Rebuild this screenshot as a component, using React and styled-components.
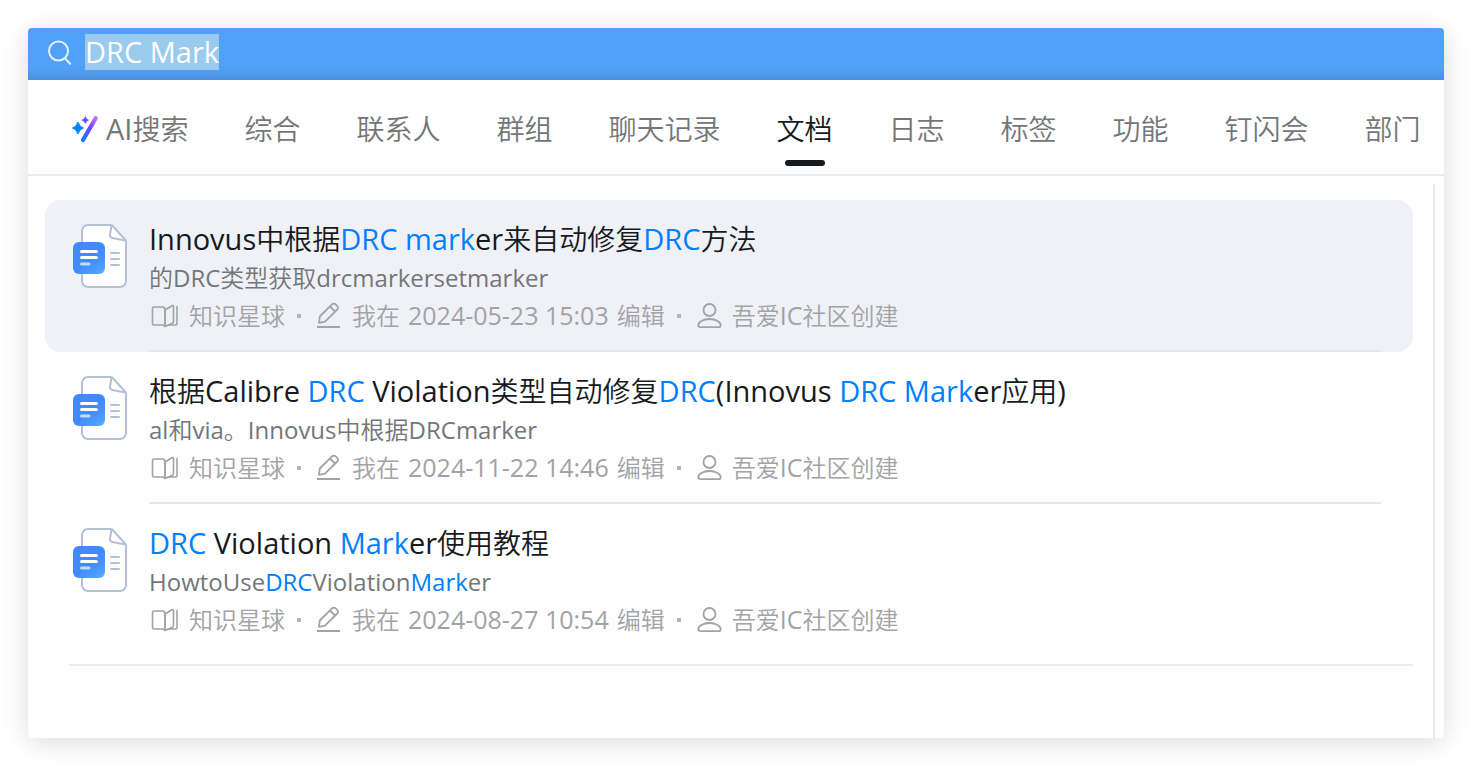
import React, { useEffect, useRef, useState } from "react";
import styled, { createGlobalStyle } from "styled-components";

const GlobalStyle = createGlobalStyle`
  * {
    box-sizing: border-box;
  }
  body {
    margin: 0;
    background-color: #fff;
    font-family: "Open Sans", "Noto Sans CJK SC", sans-serif;
    font-weight: 350;
  }
`;

const Page = styled.div`
  display: flex;
  min-height: 100vh;
  padding: 28px;
`;

const Panel = styled.main`
  flex: 1;
  min-width: 0;
  display: flex;
  flex-direction: column;
  border-radius: 4px;
  background-color: #fefefe;
  box-shadow: 0 4px 28px rgba(0, 0, 0, 0.14);
  overflow: hidden;
`;

const SearchBar = styled.label`
  display: flex;
  align-items: center;
  gap: 12px;
  height: 52px;
  padding: 0 20px 4px 18px;
  background: linear-gradient(#52a1f9 40px, #4a8fdd 52px);
`;

const SearchInput = styled.input`
  flex: 1;
  height: 36px;
  padding: 0;
  border: none;
  outline: none;
  background: transparent;
  color: #fff;
  caret-color: transparent;
  font-family: inherit;
  font-size: 29px;
  font-weight: 400;
  line-height: 36px;
  &::selection {
    background-color: rgba(155, 202, 238, 0.99);
    color: #fff;
  }
`;

const Tabs = styled.nav`
  display: flex;
  gap: 56px;
  height: 96px;
  padding: 0 20px 0 44px;
  border-bottom: 2px solid #ebebeb;
`;

const Tab = styled.button`
  position: relative;
  display: flex;
  align-items: center;
  padding: 4px 0 0;
  border: none;
  background: none;
  color: ${(props) => (props.$active ? "#171a1d" : "#747677")};
  font-family: inherit;
  font-size: 28px;
  font-weight: inherit;
  line-height: 40px;
  white-space: nowrap;
  cursor: pointer;
  svg {
    margin-right: 6px;
  }
  &::after {
    content: "";
    display: ${(props) => (props.$active ? "block" : "none")};
    position: absolute;
    left: calc(50% - 20px);
    bottom: 8px;
    width: 40px;
    height: 6px;
    border-radius: 3px;
    background-color: #171a1d;
  }
`;

const Content = styled.section`
  flex: 1;
  margin: 8px 9px 0 0;
  padding: 16px 20px 72px 17px;
  border-right: 2px solid #ebebeb;
`;

const List = styled.ul`
  margin: 0;
  padding: 0;
  list-style: none;
`;

const Row = styled.li`
  display: flex;
  gap: 22px;
  padding: 0 32px 0 28px;
  border-radius: 16px;
  background-color: ${(props) => (props.$selected ? "#f0f1f6" : "transparent")};
`;

const IconBox = styled.div`
  flex: none;
  padding-top: 24px;
  line-height: 0;
`;

const Info = styled.div`
  flex: 1;
  min-width: 0;
  padding: 19px 0 15px;
  border-bottom: 2px solid ${(props) => (props.$last ? "transparent" : "#e6e7ea")};
`;

const Title = styled.a`
  display: block;
  height: 40px;
  color: #171a1d;
  font-size: 28px;
  line-height: 40px;
  text-decoration: none;
`;

const Summary = styled.p`
  height: 38px;
  margin: 0;
  color: #747677;
  font-size: 24px;
  line-height: 38px;
`;

const Mark = styled.em`
  color: #007fff;
  font-style: normal;
`;

// latin letters are set a little larger and heavier than the hanzi around them
const Latin = styled.span`
  font-size: ${(props) => props.$size}px;
  font-weight: 400;
  line-height: 1;
`;

const Meta = styled.div`
  display: flex;
  align-items: center;
  height: 38px;
  color: #a2a3a5;
  font-size: 24px;
  line-height: 38px;
  white-space: nowrap;
  svg {
    flex: none;
    margin-right: 8px;
  }
  time {
    margin: 0 8px;
    font-size: 25px;
    font-weight: 400;
    line-height: 1;
  }
`;

const Dot = styled.span`
  width: 4px;
  height: 4px;
  margin: 0 14px 0 12px;
  background-color: #b4b5b7;
`;

const EndLine = styled.hr`
  height: 2px;
  margin: 8px 0 0 24px;
  border: none;
  background-color: #ebebeb;
`;

const SearchIcon = () => (
  <svg width="27" height="28" viewBox="0 0 27 28" fill="none" stroke="#e3f0fe" strokeWidth="2">
    <circle cx="12.5" cy="13" r="9.5" />
    <path d="M18.8 20.3l5.4 5.4" strokeLinecap="round" />
  </svg>
);

const AiIcon = () => (
  <svg width="28" height="28" viewBox="0 0 28 28">
    <defs>
      <linearGradient id="wand" x1="25" y1="2" x2="11" y2="26" gradientUnits="userSpaceOnUse">
        <stop offset="0" stopColor="#d07bf5" />
        <stop offset="0.45" stopColor="#6a45ff" />
        <stop offset="1" stopColor="#0a80ff" />
      </linearGradient>
    </defs>
    <path d="M23.800 3L11 25" stroke="url(#wand)" strokeWidth="4.200" strokeLinecap="round" />
    <path d="M6 7q1.300 4.800 5.500 6-4.200 1.200-5.500 6-1.300-4.800-5.500-6 4.200-1.200 5.500-6z" fill="#0080ff" stroke="#0080ff" />
    <path d="M13.300 1q.9 3.100 4 4-3.100.9-4 4-.9-3.100-4-4 3.100-.9 4-4z" fill="#6a4dff" />
  </svg>
);

const DocIcon = () => (
  <svg width="54" height="64" viewBox="0 0 54 64" fill="none">
    <defs>
      <linearGradient id="doc" x1="8" y1="18" x2="32" y2="50" gradientUnits="userSpaceOnUse">
        <stop offset="0.5" stopColor="#4289ff" />
        <stop offset="1" stopColor="#56acff" />
      </linearGradient>
    </defs>
    <path
      d="M15 1h22.500a3 3 0 0 1 2.200 1L52 15.500a4 4 0 0 1 1 2.700V57a6 6 0 0 1-6 6H15a6 6 0 0 1-6-6V7a6 6 0 0 1 6-6z"
      fill="#fff"
      stroke="#b3c1d6"
      strokeWidth="2"
    />
    <path
      d="M38.500 1.500L37 10.500a3 3 0 0 0 2.500 3.500L52.500 16.500"
      stroke="#b3c1d6"
      strokeWidth="2"
    />
    <path d="M38 29h8M38 35h8M38 41h8" stroke="#b3c1d6" strokeWidth="2" strokeLinecap="round" />
    <rect x="0" y="18" width="32" height="32" rx="6" fill="url(#doc)" />
    <path d="M8.500 27.500h15M8.500 33.500h15" stroke="#fff" strokeWidth="3" strokeLinecap="round" />
    <path d="M8.500 40h7.500" stroke="#c3ddff" strokeWidth="3" strokeLinecap="round" />
  </svg>
);

const BookIcon = () => (
  <svg width="32" height="28" viewBox="0 0 32 28" fill="none" stroke="#a2a3a5" strokeWidth="1.600" strokeLinejoin="round">
    <path d="M16 6.500L14 5H5a1.500 1.500 0 0 0-1.500 1.500v15A1.500 1.500 0 0 0 5 23h9l2 1.500z" />
    <path d="M16 24.500V8l7-4.200a1 1 0 0 1 1.500.9V19.500a2 2 0 0 1-1 1.700L16 24.500" />
    <path d="M28 4.500v17a1.500 1.500 0 0 1-1.500 1.500H19" strokeLinecap="round" />
  </svg>
);

const EditIcon = () => (
  <svg width="29" height="28" viewBox="0 0 29 28" fill="none" stroke="#a2a3a5" strokeWidth="1.800" strokeLinejoin="round">
    <path d="M4 20.800l.8-6.300L17 2.300a2.600 2.600 0 0 1 3.700 0l1.500 1.500a2.600 2.600 0 0 1 0 3.700L10 19.700z" />
    <path d="M15 4.500l5 5" />
    <path d="M2 25h23" strokeWidth="2" />
  </svg>
);

const UserIcon = () => (
  <svg width="29" height="28" viewBox="0 0 29 28" fill="none" stroke="#a2a3a5" strokeWidth="1.800">
    <circle cx="14.500" cy="8" r="6" />
    <path d="M14.500 17c6.500 0 11.200 3 11.200 6.300 0 1.200-.8 1.900-2 1.900H5.300c-1.200 0-2-.7-2-1.900C3.300 20 8 17 14.500 17z" />
  </svg>
);

const tabs = ["AI搜索", "综合", "联系人", "群组", "聊天记录", "文档", "日志", "标签", "功能", "钉闪会", "部门"];

// text between asterisks is a matched keyword
const results = [
  {
    title: "Innovus中根据*DRC mark*er来自动修复*DRC*方法",
    summary: "的DRC类型获取drcmarkersetmarker",
    edited: "2024-05-23 15:03",
  },
  {
    title: "根据Calibre *DRC* Violation类型自动修复*DRC*(Innovus *DRC Mark*er应用)",
    summary: "al和via。Innovus中根据DRCmarker",
    edited: "2024-11-22 14:46",
  },
  {
    title: "*DRC* Violation *Mark*er使用教程",
    summary: "HowtoUse*DRC*Violation*Mark*er",
    edited: "2024-08-27 10:54",
  },
];

const mixed = (text, size) =>
  text
    .split(/([ -~]+)/)
    .map((part, index) =>
      index % 2 ? (
        <Latin key={index} $size={size}>
          {part}
        </Latin>
      ) : (
        part
      )
    );

const highlight = (text, size) =>
  text
    .split("*")
    .map((part, index) =>
      index % 2 ? (
        <Mark key={index}>{mixed(part, size)}</Mark>
      ) : (
        <React.Fragment key={index}>{mixed(part, size)}</React.Fragment>
      )
    );

const App = () => {
  const [query, setQuery] = useState("DRC Mark");
  const [activeTab, setActiveTab] = useState("文档");
  const inputRef = useRef(null);

  useEffect(() => {
    inputRef.current.focus();
    inputRef.current.select();
  }, []);

  return (
    <Page>
      <GlobalStyle />
      <Panel>
        <SearchBar>
          <SearchIcon />
          <SearchInput
            ref={inputRef}
            aria-label="搜索"
            spellCheck={false}
            value={query}
            onChange={({ target: { value } }) => setQuery(value)}
          />
        </SearchBar>
        <Tabs>
          {tabs.map((tab, index) => (
            <Tab key={tab} $active={tab === activeTab} onClick={() => setActiveTab(tab)}>
              {index === 0 && <AiIcon />}
              <span>{mixed(tab, 29)}</span>
            </Tab>
          ))}
        </Tabs>
        <Content>
          <List>
            {results.map((item, index) => (
              <Row key={item.edited} $selected={index === 0}>
                <IconBox>
                  <DocIcon />
                </IconBox>
                <Info $last={index === results.length - 1}>
                  <Title href="#">{highlight(item.title, 29)}</Title>
                  <Summary>{highlight(item.summary, 24)}</Summary>
                  <Meta>
                    <BookIcon />
                    知识星球
                    <Dot />
                    <EditIcon />
                    <span>
                      我在
                      <time>{item.edited}</time>
                      编辑
                    </span>
                    <Dot />
                    <UserIcon />
                    <span>{mixed("吾爱IC社区创建", 25)}</span>
                  </Meta>
                </Info>
              </Row>
            ))}
          </List>
          <EndLine />
        </Content>
      </Panel>
    </Page>
  );
};

export default App;
